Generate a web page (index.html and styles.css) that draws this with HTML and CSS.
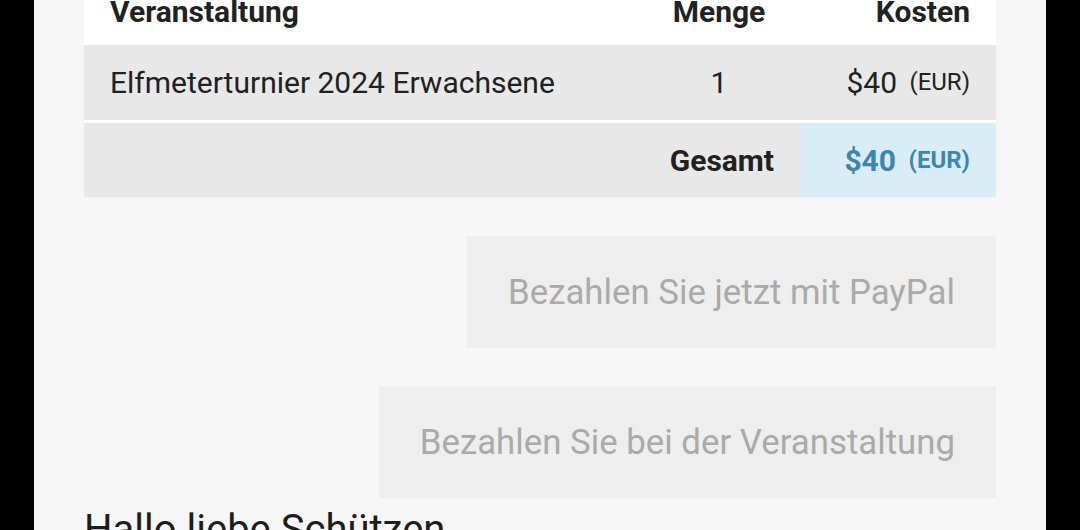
FILE: index.html
```html
<!DOCTYPE html>
<html lang="de">
<head>
  <meta charset="UTF-8">
  <title>Warenkorb</title>
  <link rel="stylesheet" href="styles.css">
</head>
<body>
  <div class="page">
    <table class="cart">
      <thead>
        <tr>
          <th class="col-event">Veranstaltung</th>
          <th class="col-qty">Menge</th>
          <th class="col-cost">Kosten</th>
        </tr>
      </thead>
      <tbody>
        <tr>
          <td class="col-event">Elfmeterturnier 2024 Erwachsene</td>
          <td class="col-qty">1</td>
          <td class="col-cost">$40 <small>(EUR)</small></td>
        </tr>
        <tr class="total">
          <td></td>
          <td class="total-label">Gesamt</td>
          <td class="col-cost total-sum">$40 <small>(EUR)</small></td>
        </tr>
      </tbody>
    </table>

    <div class="actions">
      <button class="pay-btn" disabled>Bezahlen Sie jetzt mit PayPal</button>
      <button class="pay-btn" disabled>Bezahlen Sie bei der Veranstaltung</button>
    </div>

    <h2 class="greeting">Hallo liebe Schützen</h2>
  </div>
</body>
</html>
```

FILE: styles.css
```css
html, body {
  height: 100%;
}

body {
  margin: 0;
  background: #000;
  font-family: Roboto, "Noto Sans", sans-serif;
  color: #212121;
  overflow: hidden;
}

.page {
  margin: 0 34px;
  padding: 0 50px;
  min-height: 100%;
  background: #f6f6f6;
}

.cart {
  width: 100%;
  border-collapse: collapse;
  margin-top: -23px;
}

.cart th,
.cart td {
  padding: 0 26px;
  font-size: 30px;
}

.cart th {
  height: 68px;
  background: #fff;
  font-weight: bold;
  color: #222;
}

.cart td {
  height: 75px;
  background: #e8e8e8;
}

.col-event {
  text-align: left;
}

.col-qty {
  width: 110px;
  text-align: center;
}

.col-cost {
  width: 144px;
  text-align: right;
  white-space: nowrap;
}

.cart small {
  font-size: 24px;
  margin-left: 5px;
  vertical-align: 3px;
}

.total td {
  border-top: 3px solid #fff;
  height: 74px;
}

.total-label {
  text-align: right;
  font-weight: bold;
}

.cart .total-sum {
  background: #d9edf7;
  color: #3a87b2;
  font-weight: bold;
}

.actions {
  display: flex;
  flex-direction: column;
  align-items: flex-end;
  gap: 38px;
  margin-top: 39px;
}

.pay-btn {
  height: 112px;
  padding: 0 41px;
  border: none;
  background: #eee;
  color: #aaa;
  font-family: Roboto, "Noto Sans", sans-serif;
  font-size: 34.8px;
}

.greeting {
  margin: 8px 0 0;
  font-size: 40px;
  font-weight: normal;
  color: #1d1d1d;
}
```
